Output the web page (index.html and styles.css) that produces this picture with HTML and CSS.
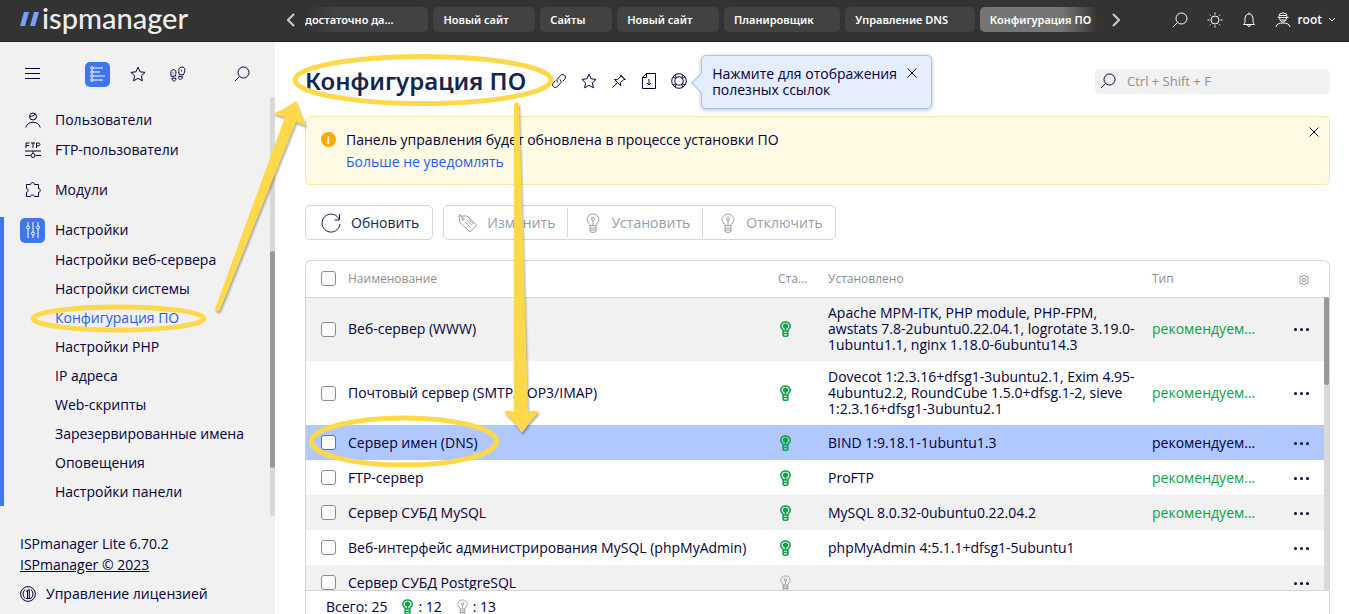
FILE: index.html
```html
<!DOCTYPE html>
<html lang="ru">
<head>
<meta charset="utf-8">
<title>Конфигурация ПО — ispmanager</title>
<link rel="stylesheet" href="styles.css">
</head>
<body>
<svg class="sprite" aria-hidden="true">
  <symbol id="search" viewBox="0 0 16 16"><circle cx="9.5" cy="6.5" r="5.5"/><path d="M5.4 10.6 1 15"/></symbol>
  <symbol id="star" viewBox="0 0 16 16"><path d="m8 1.2 2.1 4.6 5 .6-3.7 3.4 1 5L8 12.300 3.600 14.800l1-5L.9 6.400l5-.6z"/></symbol>
  <symbol id="close" viewBox="0 0 12 12"><path d="m1.500 1.500 9 9m0-9-9 9"/></symbol>
  <symbol id="bulb" viewBox="0 0 14 20"><path d="M4 12.500C4 10.500 1 9.500 1 6.500a6 5.500 0 0 1 12 0c0 3-3 4-3 6zM4 15h6M4 17h6M4 12.500V18q0 1.400 3 1.400t3-1.400v-5.500M7 7v5"/><circle cx="7" cy="6" r="1.500"/></symbol>
  <symbol id="bulb-on" viewBox="0 0 14 20"><path d="M4 12.500C4 10.500 1 9.500 1 6.500a6 5.500 0 0 1 12 0c0 3-3 4-3 6zM4 15.700h6M4 12.500V18q0 1.400 3 1.400t3-1.400v-5.500M7 7v5"/><circle cx="7" cy="6.200" r="2.300" fill="currentColor"/></symbol>
</svg>

<header class="topbar">
  <a class="logo" href="#"><svg width="19" height="14" viewBox="0 0 19 14"><path d="M4 0h5L5 14H0zM14 0h5l-4 14h-5z"/></svg><span>ispmanager</span></a>
  <button class="bare tab-arrow" aria-label="Назад"><svg width="8" height="14" viewBox="0 0 8 14"><path d="M7 1 1 7l6 6"/></svg></button>
  <nav class="tabs">
    <a class="tab tab-first" href="#">достаточно да...</a>
    <a class="tab" href="#">Новый сайт</a>
    <a class="tab" href="#">Сайты</a>
    <a class="tab" href="#">Новый сайт</a>
    <a class="tab" href="#">Планировщик</a>
    <a class="tab" href="#">Управление DNS</a>
    <a class="tab tab-current" href="#">Конфигурация ПО</a>
  </nav>
  <button class="bare tab-arrow" aria-label="Вперёд"><svg width="8" height="14" viewBox="0 0 8 14"><path d="m1 1 6 6-6 6"/></svg></button>
  <div class="tools">
    <button class="bare" aria-label="Поиск"><svg width="16" height="16"><use href="#search"/></svg></button>
    <button class="bare" aria-label="Тема"><svg width="16" height="16" viewBox="0 0 16 16"><circle cx="8" cy="8" r="4"/><path d="M8 .5v2m0 11v2M.5 8h2m11 0h2M2.700 2.700l1 1m8.600 8.600 1 1m0-10.600-1 1m-8.600 8.600-1 1"/></svg></button>
    <button class="bare" aria-label="Уведомления"><svg width="14" height="16" viewBox="0 0 14 16"><path d="M1.500 12.500c1.500-1 1.500-3 1.500-5.500 0-3 1.500-5 4-5s4 2 4 5c0 2.500 0 4.500 1.500 5.500zM7 .5V2M5.500 12.500a1.500 2 0 0 0 3 0"/></svg></button>
    <button class="bare user"><svg width="16" height="16" viewBox="0 0 16 16"><path d="M1 15c.5-3 3-4 7-4s6.500 1 7 4M2.500 5.500h11M4 5.500 4.500 2 8 .8l3.500 1.200.5 3.500M4.500 5.500c0 6 7 6 7 0M5 3.500h6M5.500 8h5"/></svg>root<svg width="8" height="6" viewBox="0 0 8 6"><path d="m1 1 3 3 3-3"/></svg></button>
  </div>
</header>

<div class="body">
  <aside class="sidebar">
    <div class="side-tools">
      <button class="bare menu-btn" aria-label="Меню"><svg width="15" height="12" viewBox="0 0 15 12"><path d="M0 .5h15M0 5.500h15M0 10.500h15"/></svg></button>
      <button class="bare tile" aria-label="Список"><svg width="16" height="16" viewBox="0 0 16 16"><g><circle cx="2" cy="2" r="1.300"/><circle cx="2" cy="6" r="1.300"/><circle cx="2" cy="10" r="1.300"/><circle cx="2" cy="14" r="1.300"/></g><path d="M3.500 2H13M3.500 6H10M3.500 10H15M3.500 14H13"/></svg></button>
      <button class="bare" aria-label="Избранное"><svg width="16" height="16"><use href="#star"/></svg></button>
      <button class="bare steps" aria-label="Шаги"><svg width="16" height="16" viewBox="0 0 16 16"><path d="M1.200 10.300C.4 7 .5 4 3.300 3.700 6 3.500 6.300 6 5.500 10zM2 12c0 4 4 4 4 .3zM9.200 8.500C8.300 4.500 8.500 1.200 12 1c3.600 0 3.500 4 1.200 8zM8.800 10.300c-1 4 3.200 4.300 3.800.5zM3 6.500v1M11.500 4v1.500"/></svg></button>
      <button class="bare side-search" aria-label="Найти в меню"><svg width="16" height="16"><use href="#search"/></svg></button>
    </div>
    <nav class="nav">
      <a class="nav-item" href="#"><svg width="16" height="16" viewBox="0 0 16 16"><circle cx="8" cy="4.500" r="3.500"/><path d="M.8 15.500C2 8.500 14 8.500 15.200 15.500M4.500 4.500c3 0 4.500-1 5.500-2.500"/></svg>Пользователи</a>
      <a class="nav-item" href="#"><svg width="16" height="16" viewBox="0 0 16 16"><path d="M1 6V1h3.500M1 3.500h3M6 1h4M8 1v5M11.500 6V1h1.800q1.700 0 1.700 1.400t-1.700 1.400h-1.800M0 9h16M0 13.500h5.500m5 0H16M8 9v2"/><circle cx="8" cy="13.500" r="2"/></svg>FTP-пользователи</a>
      <a class="nav-item nav-modules" href="#"><svg width="16" height="16" viewBox="0 0 16 16"><path d="M1.500 2.500h4c-.2-2.500 4.200-2.500 4 0h4v4.200c2.500-.2 2.500 3.800 0 3.600v4.200h-4c.2-2-4.200-2-4 0h-4v-4.200c2 .2 2-3.800 0-3.600z"/></svg>Модули</a>
      <div class="nav-group">
        <a class="nav-item nav-parent" href="#"><span class="tile"><svg width="16" height="18" viewBox="0 0 16 18"><path d="M3 1v4m0 3v9M8 1v10m0 3v3M13 1v4m0 3v9"/><circle cx="3" cy="6.500" r="1.500"/><circle cx="8" cy="12.500" r="1.500"/><circle cx="13" cy="6.500" r="1.500"/></svg></span>Настройки</a>
        <ul class="subnav">
          <li><a href="#">Настройки веб-сервера</a></li>
          <li><a href="#">Настройки системы</a></li>
          <li><a class="current" href="#">Конфигурация ПО</a></li>
          <li><a href="#">Настройки PHP</a></li>
          <li><a href="#">IP адреса</a></li>
          <li><a href="#">Web-скрипты</a></li>
          <li><a href="#">Зарезервированные имена</a></li>
          <li><a href="#">Оповещения</a></li>
          <li><a href="#">Настройки панели</a></li>
        </ul>
      </div>
    </nav>
    <div class="about">
      <span>ISPmanager Lite 6.70.2</span>
      <a href="#">ISPmanager © 2023</a>
    </div>
    <a class="license" href="#"><svg width="16" height="16" viewBox="0 0 16 16"><circle cx="8" cy="8" r="7.400"/><path d="M5 3.500q-4 4.500 0 9M11 3.500q4 4.500 0 9M6 5.500 9.300 3.500v9M7.500 5v7.500M6 12.500h5"/></svg>Управление лицензией</a>
    <div class="side-track"><div class="side-thumb"></div></div>
  </aside>

  <main class="main">
    <div class="title-row">
      <h1>Конфигурация ПО</h1>
      <div class="title-icons">
        <button class="bare" aria-label="Ссылка"><svg width="16" height="16" viewBox="0 0 16 16"><path d="M7.300 9.500C5.500 8.500 5.500 6.800 6.800 5.500L9.800 2.300c2.400-2.400 6.300 1.200 3.900 3.900L11.800 8.200M8.700 6.500c1.800 1 1.800 2.700.5 4L6.200 13.700c-2.400 2.400-6.300-1.200-3.900-3.900L4.200 7.800"/></svg></button>
        <button class="bare" aria-label="В избранное"><svg width="16" height="16"><use href="#star"/></svg></button>
        <button class="bare" aria-label="Закрепить"><svg width="16" height="16" viewBox="0 0 16 16"><path d="m9.500 2 4.500 4.500-1.500.2-3 3 .3 3L3.500 6.500l3 .2 3-3zM6.500 9.700 1.500 14.500M9 1.500 14.500 7"/></svg></button>
        <button class="bare" aria-label="Скачать"><svg width="14" height="16" viewBox="0 0 14 16"><path d="M4.500.5h9v15H.5v-11zM4.500.5v4h-4M7 6v6M5 10l2 2 2-2"/></svg></button>
        <div class="help">
          <button class="bare" aria-label="Справка"><svg width="16" height="16" viewBox="0 0 16 16"><circle cx="8" cy="8" r="7.300"/><circle cx="8" cy="8" r="4.200"/><path d="m2 4 3 1.500M4 2l1.500 3M12 2l-1.500 3M14 4l-3 1.500M2 12l3-1.500M4 14l1.500-3M12 14l-1.500-3M14 12l-3-1.500"/></svg></button>
          <div class="tooltip"><p>Нажмите для отображения<br>полезных ссылок</p><button class="bare" aria-label="Закрыть подсказку"><svg width="12" height="12"><use href="#close"/></svg></button></div>
        </div>
      </div>
      <label class="search"><svg width="16" height="16"><use href="#search"/></svg><input type="text" aria-label="Поиск" placeholder="Ctrl + Shift + F"></label>
    </div>

    <section class="alert">
      <span class="info">i</span>
      <div class="alert-text"><p>Панель управления будет обновлена в процессе установки ПО</p><a href="#">Больше не уведомлять</a></div>
      <button class="bare" aria-label="Закрыть"><svg width="12" height="12"><use href="#close"/></svg></button>
    </section>

    <div class="actions">
      <div class="group"><button><svg width="20" height="20" viewBox="0 0 20 20"><path d="M18.500 7A9 9 0 1 0 19 11M18.500 1v6h-5"/></svg>Обновить</button></div>
      <div class="group">
        <button disabled><svg width="20" height="20" viewBox="0 0 20 20"><path d="M1 3h8l9.500 9-6.500 7L2 9.500zM1 1l4 4M7 9l5 5M9 7.500l5 5M11 6.500l4.500 4.500"/><circle cx="5" cy="6" r="1.200"/></svg>Изменить</button>
        <button disabled><svg class="bulb" width="14" height="20"><use href="#bulb"/></svg>Установить</button>
        <button disabled><svg class="bulb" width="14" height="20"><use href="#bulb"/></svg>Отключить</button>
      </div>
    </div>

    <section class="panel">
      <div class="scroll">
        <table>
          <colgroup><col class="c-check"><col><col class="c-state"><col class="c-inst"><col class="c-type"><col class="c-menu"></colgroup>
          <thead><tr><th><input type="checkbox" aria-label="Выбрать все"></th><th>Наименование</th><th>Ста...</th><th>Установлено</th><th>Тип</th><th class="menu"><button class="bare" aria-label="Настройка столбцов"><svg width="10" height="10" viewBox="0 0 10 10"><path d="M4 .5h2l.5 1.200L8.500 1.500l1 1.700L8.700 5l.8 1.800-1 1.700-2-.2L6 9.500H4l-.5-1.200-2 .2-1-1.700L1.300 5 .5 3.200l1-1.700 2 .2z"/><circle cx="5" cy="5" r="1.500"/></svg></button></th></tr></thead>
          <tbody>
            <tr class="tall"><td><input type="checkbox" id="r1"></td><td><label for="r1">Веб-сервер (WWW)</label></td><td><svg class="on" width="11" height="16"><use href="#bulb-on"/></svg></td><td>Apache MPM-ITK, PHP module, PHP-FPM,<br>awstats 7.8-2ubuntu0.22.04.1, logrotate 3.19.0-<br>1ubuntu1.1, nginx 1.18.0-6ubuntu14.3</td><td class="type">рекомендуем...</td><td class="menu"><button class="bare dots" aria-label="Действия"><i></i><i></i><i></i></button></td></tr>
            <tr class="tall"><td><input type="checkbox" id="r2"></td><td><label for="r2">Почтовый сервер (SMTP/POP3/IMAP)</label></td><td><svg class="on" width="11" height="16"><use href="#bulb-on"/></svg></td><td>Dovecot 1:2.3.16+dfsg1-3ubuntu2.1, Exim 4.95-<br>4ubuntu2.2, RoundCube 1.5.0+dfsg.1-2, sieve<br>1:2.3.16+dfsg1-3ubuntu2.1</td><td class="type">рекомендуем...</td><td class="menu"><button class="bare dots" aria-label="Действия"><i></i><i></i><i></i></button></td></tr>
            <tr class="selected"><td><input type="checkbox" id="r3"></td><td><label for="r3">Сервер имен (DNS)</label></td><td><svg class="on" width="11" height="16"><use href="#bulb-on"/></svg></td><td>BIND 1:9.18.1-1ubuntu1.3</td><td class="type">рекомендуем...</td><td class="menu"><button class="bare dots" aria-label="Действия"><i></i><i></i><i></i></button></td></tr>
            <tr><td><input type="checkbox" id="r4"></td><td><label for="r4">FTP-сервер</label></td><td><svg class="on" width="11" height="16"><use href="#bulb-on"/></svg></td><td>ProFTP</td><td class="type">рекомендуем...</td><td class="menu"><button class="bare dots" aria-label="Действия"><i></i><i></i><i></i></button></td></tr>
            <tr><td><input type="checkbox" id="r5"></td><td><label for="r5">Сервер СУБД MySQL</label></td><td><svg class="on" width="11" height="16"><use href="#bulb-on"/></svg></td><td>MySQL 8.0.32-0ubuntu0.22.04.2</td><td class="type">рекомендуем...</td><td class="menu"><button class="bare dots" aria-label="Действия"><i></i><i></i><i></i></button></td></tr>
            <tr><td><input type="checkbox" id="r6"></td><td><label for="r6">Веб-интерфейс администрирования MySQL (phpMyAdmin)</label></td><td><svg class="on" width="11" height="16"><use href="#bulb-on"/></svg></td><td>phpMyAdmin 4:5.1.1+dfsg1-5ubuntu1</td><td></td><td class="menu"><button class="bare dots" aria-label="Действия"><i></i><i></i><i></i></button></td></tr>
            <tr><td><input type="checkbox" id="r7"></td><td><label for="r7">Сервер СУБД PostgreSQL</label></td><td><svg class="off" width="11" height="16"><use href="#bulb"/></svg></td><td></td><td></td><td class="menu"><button class="bare dots" aria-label="Действия"><i></i><i></i><i></i></button></td></tr>
          </tbody>
        </table>
        <div class="track"><div class="thumb"></div></div>
      </div>
      <footer class="totals"><span>Всего: 25</span><span><svg class="on" width="11" height="16"><use href="#bulb-on"/></svg>: 12</span><span><svg class="off" width="11" height="16"><use href="#bulb"/></svg>: 13</span></footer>
    </section>
  </main>
</div>

<svg class="marks" width="560" height="480" viewBox="0 0 560 480" aria-hidden="true">
  <g class="rings"><ellipse cx="423" cy="80" rx="128" ry="23.500"/><ellipse cx="118.500" cy="318.500" rx="85.500" ry="11.500"/><ellipse cx="404" cy="441.500" rx="92.500" ry="23.500"/></g>
  <g class="arrows"><path d="M215 309 285 117 273 114Q285 109 296 101 300 112 306 126L296 122 220 310Q217 313 215 309z"/><path d="M514 104q2.500-4 5 0L528 412Q534 409 539 412 530 421 522 433 514 421 504 412q5-3 10 0z"/></g>
</svg>
</body>
</html>
```
FILE: styles.css
```css
* { box-sizing: border-box; }
body {
  margin: 0;
  height: 100vh;
  overflow: hidden;
  display: flex;
  flex-direction: column;
  position: relative;
  font: 14px/16px "Open Sans", sans-serif;
  color: #00003c;
  background: #fff;
}
a { color: inherit; text-decoration: none; }
p, h1, ul { margin: 0; padding: 0; }
svg { fill: none; stroke: currentColor; flex: none; }
.sprite { position: absolute; width: 0; height: 0; }
.bare {
  border: 0;
  padding: 0;
  background: none;
  font: inherit;
  color: inherit;
  display: inline-flex;
  align-items: center;
  justify-content: center;
}

.topbar {
  flex: none;
  height: 42px;
  display: flex;
  align-items: center;
  padding: 0 13px 2px 20px;
  background: #333;
  color: #fff;
  border-bottom: 1px solid #222;
}
.logo {
  display: flex;
  align-items: center;
  gap: 3px;
  width: 266px;
  height: 40px;
  padding-bottom: 4px;
  font: 500 29px/36px Lato, sans-serif;
  color: #eee;
}
.logo svg { fill: #7a9eff; stroke: none; margin-top: 2px; }
.tab-arrow { width: 10px; color: #ccc; }
.tab-arrow svg { stroke-width: 2; }
.tabs {
  flex: 0 1 793px;
  display: flex;
  gap: 5px;
  margin: 0 13px 0 9px;
  overflow: hidden;
}
.tab {
  flex: 1 0 auto;
  height: 25px;
  padding: 0 24px 0 10px;
  border-radius: 5px;
  background: #424242;
  font: 600 11px/25px "Noto Sans", sans-serif;
  white-space: nowrap;
}
.tab-first { padding: 0 32px 0 0; background: linear-gradient(90deg, #333, #424242 30px); }
.tab-current { padding-right: 4px; background: linear-gradient(90deg, #757575 70%, #333); }
.tools { display: flex; align-items: center; gap: 19px; margin-left: auto; }
.user { gap: 6px; font-weight: 600; font-size: 12px; }

.body { flex: 1; min-height: 0; display: flex; }
.sidebar {
  position: relative;
  flex: 0 0 275px;
  background: #f1f1f1;
}
.side-tools {
  display: flex;
  align-items: center;
  gap: 20px;
  height: 63px;
  padding: 1px 25px 0 25px;
}
.tile {
  width: 25px;
  height: 25px;
  display: flex;
  align-items: center;
  justify-content: center;
  border-radius: 5px;
  background: #3f75ee;
  color: #fff;
}
.menu-btn { margin-right: 25px; }
.steps { margin-left: 4px; }
.side-search { margin-left: auto; }
.nav-item {
  display: flex;
  align-items: center;
  gap: 14px;
  height: 30px;
  padding-left: 25px;
}
.nav-modules { margin: 10px 0 12px; }
.nav-group { border-left: 4px solid #3f75ee; }
.nav-parent { height: 26px; padding-left: 16px; gap: 10px; font-weight: 500; }
.subnav { list-style: none; padding: 2px 0 0 51px; line-height: 29px; }
.current { color: #1f5eea; }
.about {
  display: flex;
  flex-direction: column;
  align-items: flex-start;
  padding: 27px 20px 0;
  line-height: 21px;
}
.about a { text-decoration: underline; }
.license { display: flex; align-items: center; gap: 10px; padding: 11px 20px; }
.side-track {
  position: absolute;
  top: 55px;
  right: 0;
  width: 5px;
  height: 419px;
  border-radius: 3px;
  background: #d9d9d9;
  padding-top: 154px;
}
.side-thumb { height: 217px; border-radius: 3px; background: #999; }

.main {
  flex: 1;
  min-width: 0;
  display: flex;
  flex-direction: column;
  padding: 0 19px 0 30px;
}
.title-row {
  flex: none;
  height: 74px;
  display: flex;
  align-items: center;
  padding-top: 4px;
}
h1 { font: 600 24px/32px "Noto Sans", sans-serif; color: #14264e; white-space: nowrap; }
.title-icons { display: flex; align-items: center; margin-left: 18px; }
.title-icons > *, .help > button { width: 30px; height: 30px; }
.help { position: relative; }
.tooltip {
  position: absolute;
  left: 37px;
  top: -11px;
  width: 231px;
  height: 54px;
  display: flex;
  justify-content: space-between;
  align-items: flex-start;
  padding: 10px 12px 11px 10px;
  border: 1px solid #a6c3fb;
  border-radius: 5px;
  background: #e6edff;
  box-shadow: 0 1px 4px #0004;
  white-space: nowrap;
  z-index: 1;
}
.tooltip::before {
  content: "";
  position: absolute;
  left: -8px;
  top: 20px;
  width: 13px;
  height: 13px;
  border: 1px solid #a6c3fb;
  border-width: 0 0 1px 1px;
  background: #e6edff;
  transform: rotate(45deg);
}
.tooltip > button { width: 14px; height: 14px; }
.search {
  margin-left: auto;
  width: 235px;
  height: 25px;
  display: flex;
  align-items: center;
  gap: 11px;
  padding: 0 5px;
  border-radius: 5px;
  background: #f1f1f1;
}
.search input { flex: 1; min-width: 0; border: 0; padding: 0; background: none; font: inherit; font-size: 13px; outline: 0; }
.search input::placeholder { color: #8b8f8e; }

.alert {
  flex: none;
  display: flex;
  align-items: flex-start;
  gap: 10px;
  height: 69px;
  padding: 12px 8px 12px 15px;
  border: 1px solid #f6eda0;
  border-radius: 5px;
  background: #fffae3;
  line-height: 22px;
}
.alert-text { flex: 1; }
.alert a { color: #1f5eea; }
.alert > button { width: 14px; height: 14px; margin-top: -4px; }
.info {
  width: 15px;
  height: 15px;
  margin-top: 3px;
  border-radius: 50%;
  background: #ffa800;
  color: #fff;
  font-size: 11px;
  font-weight: 700;
  line-height: 15px;
  text-align: center;
}

.actions { flex: none; display: flex; gap: 10px; padding: 20px 0; }
.group { display: flex; align-items: center; height: 35px; border: 1px solid #d6d6d6; border-radius: 5px; }
.group button {
  height: 29px;
  display: flex;
  align-items: center;
  gap: 10px;
  padding: 0 13px 0 15px;
  border: 0;
  background: none;
  font: inherit;
  color: #14264e;
}
.group button + button { border-left: 1px solid #d6d6d6; }
.group button:disabled { color: #979eac; gap: 9px; padding: 0 12px 0 14px; }
.bulb { margin: 0 2px 0 4px; }

.panel {
  flex: 1;
  min-height: 0;
  display: flex;
  flex-direction: column;
  border: 1px solid #d6d6d6;
  border-bottom: 0;
  border-radius: 6px 6px 0 0;
}
.scroll { position: relative; flex: 1; min-height: 0; overflow: hidden; }
table { width: 100%; table-layout: fixed; border-collapse: collapse; }
.c-check { width: 42px; }
.c-state { width: 50px; }
.c-inst { width: 324px; }
.c-type { width: 130px; }
.c-menu { width: 47px; }
th, td { padding: 0; text-align: left; white-space: nowrap; }
th { height: 36px; border-bottom: 1px solid #d6d6d6; color: #8b8f8e; font-size: 12px; font-weight: 400; }
td { height: 35px; }
td svg { display: block; margin-left: 2px; }
.tall td { height: 64px; }
tbody tr:nth-child(odd) { background: #f1f1f1; }
tbody tr.selected { background: #b1c8ff; }
input[type="checkbox"] {
  appearance: none;
  display: block;
  width: 15px;
  height: 15px;
  margin: 0 0 0 15px;
  border: 1px solid #8c8c8c;
  border-radius: 3px;
  background: #fff;
}
.selected input[type="checkbox"] { border-color: #3f75ee; }
.type { color: #0b9f4c; }
.selected .type { color: inherit; }
.menu { text-align: right; padding-right: 20px; }
.menu .bare { vertical-align: middle; }
.dots { gap: 3px; height: 16px; }
.dots i { width: 3px; height: 3px; border-radius: 50%; background: currentColor; }
.on { color: #0aa14b; stroke-width: 2; }
.off { color: #8c8c8c; }
.track { position: absolute; top: 36px; right: 0; bottom: 0; width: 5px; background: #d9d9d9; }
.thumb { height: 88px; border-radius: 3px; background: #999; }
.totals { flex: none; display: flex; gap: 15px; height: 24px; padding: 8px 20px 0; border-top: 1px solid #d6d6d6; }
.totals span { display: flex; align-items: center; gap: 5px; }

.marks { position: absolute; left: 0; top: 0; z-index: 2; pointer-events: none; }
.rings { stroke: #ffd94a; stroke-width: 5; }
.arrows { fill: #ffd94a; stroke: none; filter: drop-shadow(1px 2px 1px #0005); }
```
